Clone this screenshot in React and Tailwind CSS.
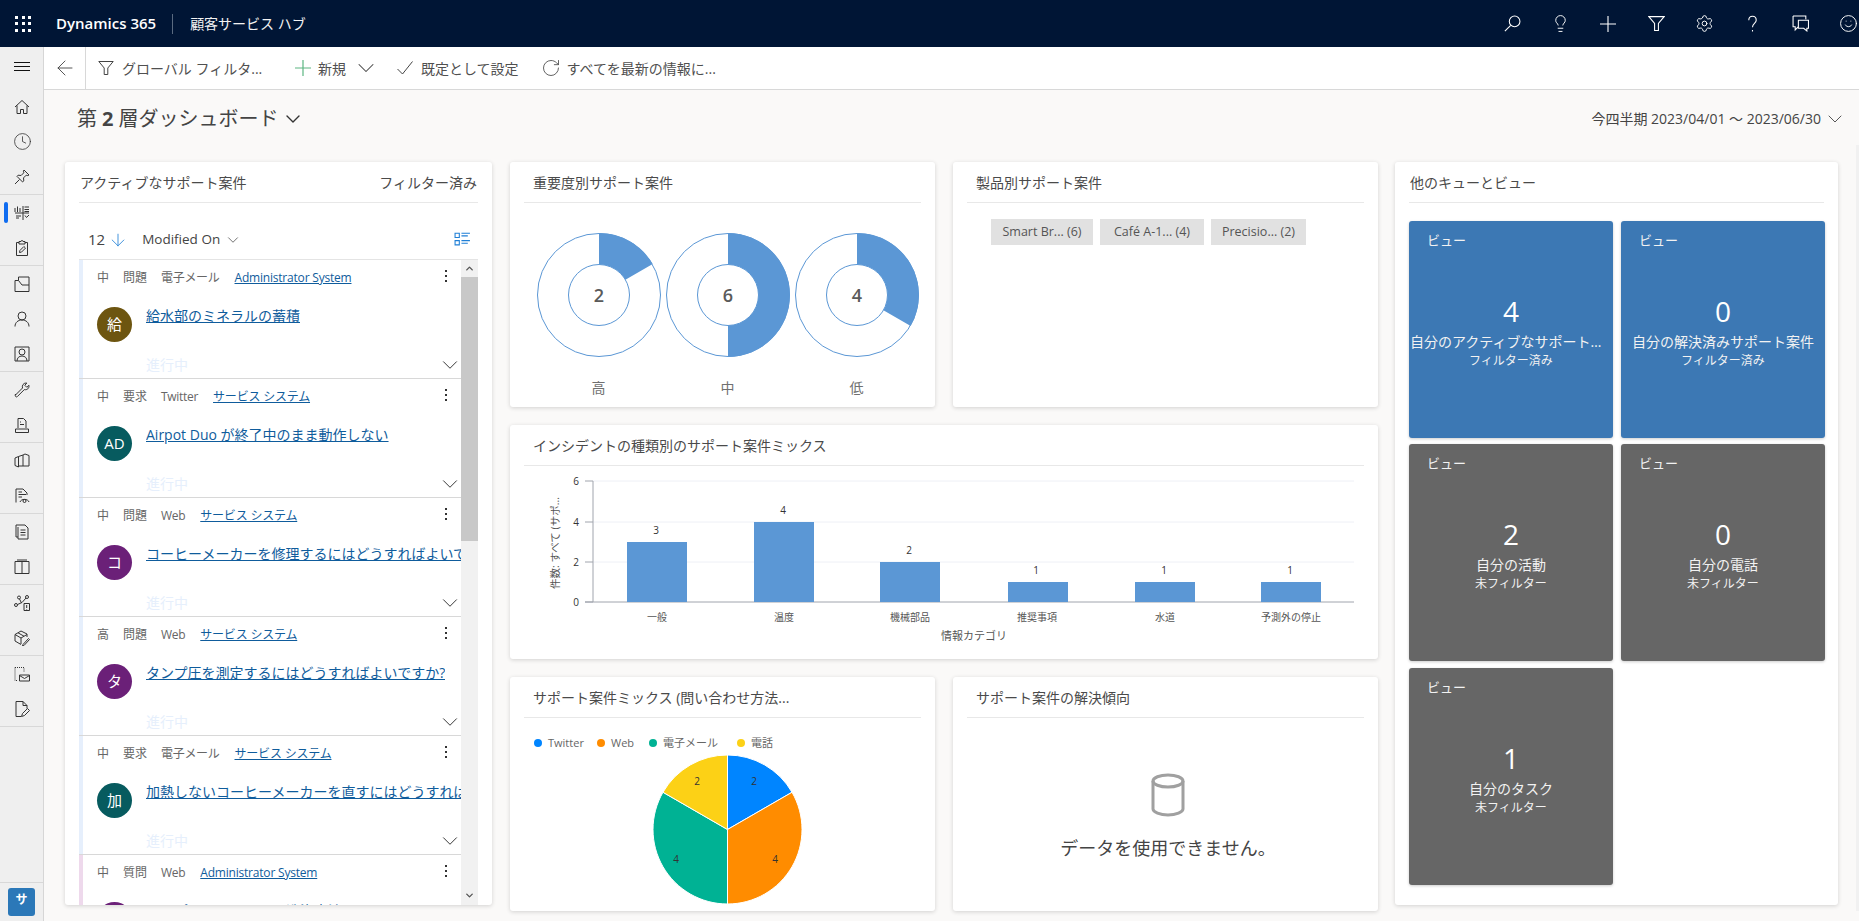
import { Settings, Smile, Lightbulb, Clock, ChevronDown, ChevronUp, ArrowLeft, ArrowDown, RotateCw } from 'lucide-react';

const Ico = ({ children, size = 16, className = 'text-[#333]', sw = 1 }) => (
    <svg width={size} height={size} viewBox="0 0 16 16" fill="none" stroke="currentColor" strokeWidth={sw} className={className}>
        {children}
    </svg>
);

const Funnel = (props) => (
    <Ico {...props}>
        <path d="M0.8 1.5h14.4L9.8 8v6.5H6.2V8z" />
    </Ico>
);

const navGroups = [
    [
        <Ico key="home"><path d="M1 8l7-6.5L15 8M3 6.5v8h3.5v-4h3v4H13v-8" /></Ico>,
        <Clock key="clock" size={19} strokeWidth={1} className="text-[#333]" />,
        <Ico key="pin"><path d="M10 1l5 5-1.2.6-1.6-.4-2.7 2.7.3 3L8.6 13 3 7.4l1.1-1.2 3 .3 2.700-2.700-.4-1.600zM5.500 10.500L1 15" /></Ico>,
    ],
    [
        <Ico key="tier"><path d="M1 7V3M3.500 7V1.500M6 7V3M9 1v14M1 8h14M10.500 2H15M10.500 4.500H15M10.500 6.500H15M11 10.500l1.500 2 2.500-2.500M2 11h5M2 13h3" /></Ico>,
        <Ico key="clip"><path d="M5 2.500H2.500v13h11v-13H11M5 4V1.500h2a1 1 0 012 0h2V4zM5.500 12.500l.4-2 4-4 1.600 1.600-4 4z" /></Ico>,
    ],
    [
        <Ico key="folder"><path d="M1 4.500v11h14V1H4.500v3.500M1 4.500h3.500L8 9h7" /></Ico>,
        <Ico key="person"><circle cx="8" cy="5" r="4" /><path d="M1 15.500c0-4 3-6.500 7-6.500s7 2.500 7 6.500" /></Ico>,
        <Ico key="contact"><path d="M1 1h14v14H1z" /><circle cx="8" cy="6" r="3" /><path d="M3 15c0-3 2-5 5-5s5 2 5 5" /></Ico>,
    ],
    [
        <Ico key="wrench"><path d="M1.500 13L8.500 6c-.8-2.500 1-5 3.500-5l.8.1-2 2.200 2 2 2.200-2c.4 3-2 5-4.700 4.300l-7 7c-1.200 1-2.800-.6-1.800-2.600z" /></Ico>,
        <Ico key="kb"><path d="M4 11V1.500h5.500L12 4v7M1.500 15.500v-3.500h13v3.500zM6 5h1M6 7.500h4" /></Ico>,
    ],
    [
        <Ico key="map"><path d="M1 5l3.500-1.500V14L1 12.500zM4.500 3.500L9 2v11H4.500M9 2l2-1 4 1.500V13H9" /></Ico>,
        <Ico key="docwatch"><path d="M2 14.500V1h7l4 4v2M4.500 4H8M4.500 6.500H12M4.500 9H8M6 14c1-3.500 8-3.500 9 0" /><circle cx="10.500" cy="13" r="1.500" /></Ico>,
    ],
    [
        <Ico key="docs"><path d="M2 1h9l3 3v11H4V3M2 1v12h2M6.500 6h5M6.500 8.500h5M6.500 11h5" /></Ico>,
        <Ico key="book"><path d="M1 2.500h14v12H1zM8 2.500v12M3 1h10" /></Ico>,
    ],
    [
        <Ico key="graph"><circle cx="5" cy="2.500" r="1.500" /><circle cx="13" cy="2" r="1.500" /><circle cx="2" cy="10" r="1.500" /><path d="M5.500 4l2 4M12 3L8 7.500l-4.500 2M10 8.500h5.500v7H10zM12.700 10v3M12.700 14v.6" /></Ico>,
        <Ico key="box"><path d="M1 4.500L7 1l6 3v3M1 4.500V11l6 3.500M1 4.500L7 8v6M7 8l6-3.500M4 2.800l6 3.400M9 14.500L14.500 8.500l1 1L10 15.500l-1.500.5z" /></Ico>,
    ],
    [
        <Ico key="mail"><path d="M1 1.500h9v5M1 1.500v13h3" strokeDasharray="1 1" /><path d="M5.500 9h10v6h-10zM5.500 9.500l5 3 5-3" /></Ico>,
        <Ico key="note"><path d="M2 15.500V.5h7l4 4v3M2 15.500h5M9 .5v4h4M7.500 15.500l1-3 5-5 2 2-5 5z" /></Ico>,
    ],
];

const Sidebar = () => (
    <aside className="w-[44px] shrink-0 bg-[#efefef] border-r border-[#d6d6d6] flex flex-col">
        <div className="h-[42px] flex items-center justify-center pb-[2px]">
            <Ico size={16} className="text-[#111]"><path d="M0 3.500h16M0 7.500h16M0 11.500h16" /></Ico>
        </div>
        {navGroups.map((group, i) => (
            <div key={i} className="border-b border-[#d8d8d8] flex flex-col">
                {group.map((icon, j) => (
                    <div key={j} className="relative h-[35px] flex items-center justify-center pl-[1px]">
                        {i === 1 && j === 0 && (
                            <span className="absolute left-[4px] top-[7px] w-[4px] h-[21px] rounded-full bg-[#0f6cf0]" />
                        )}
                        {icon}
                    </div>
                ))}
            </div>
        ))}
        <div className="mt-auto border-t border-[#d8d8d8] h-[39px] flex items-center justify-center">
            <div className="w-[27px] h-[28px] rounded-[3px] bg-[#2b78b8] text-white text-[12px] font-bold flex items-center justify-center pb-[5px]">サ</div>
        </div>
    </aside>
);

const TopBar = () => (
    <header className="h-[47px] shrink-0 bg-[#001535] text-white flex items-center overflow-hidden">
        <div className="w-[46px] flex justify-center">
            <div className="grid grid-cols-3 gap-[3.500px]">
                {Array.from({ length: 9 }).map((_, i) => (
                    <span key={i} className="w-[3px] h-[3px] bg-white" />
                ))}
            </div>
        </div>
        <span className="ml-[10px] text-[15px] font-semibold leading-none">Dynamics 365</span>
        <span className="ml-[16px] w-[1px] h-[20px] bg-[#5a6a80]" />
        <span className="ml-[17px] text-[14px] leading-none text-[#f2f2f2]">顧客サービス ハブ</span>
        <div className="ml-auto -mr-[13px] flex items-center">
            {[
                <Ico key="s" size={17} className="text-white"><circle cx="10" cy="6" r="5" /><path d="M6.300 9.700L.8 15.200" /></Ico>,
                <Lightbulb key="l" size={19} strokeWidth={1.2} />,
                <Ico key="p" size={16} className="text-white" sw={1.1}><path d="M8 0v16M0 8h16" /></Ico>,
                <Funnel key="f" size={17} className="text-white" />,
                <Settings key="g" size={19} strokeWidth={1.2} />,
                <Ico key="h" size={17} className="text-white"><path d="M4.500 5c0-5 7-5 7 0 0 3-3.500 3-3.500 6.500M8 14v1.500" /></Ico>,
                <Ico key="c" size={17} className="text-white"><path d="M1 1h12v3M1 1v10h2v3l3-3M6 5h9.500v7.500H14v2.500l-3-2.500H6z" /></Ico>,
                <Smile key="m" size={19} strokeWidth={1.2} />,
            ].map((icon, i) => (
                <div key={i} className="w-[48px] flex justify-center">{icon}</div>
            ))}
        </div>
    </header>
);

const CommandBar = () => (
    <div className="h-[43px] shrink-0 bg-white border-b border-[#d8d8d8] flex items-center text-[14px] text-[#505050] whitespace-nowrap">
        <div className="w-[42px] h-full border-r border-[#d8d8d8] flex items-center justify-center">
            <ArrowLeft size={24} strokeWidth={0.9} className="text-[#444]" />
        </div>
        <Funnel size={16} className="ml-[12px] text-[#444]" />
        <span className="ml-[8px] w-[140px]">グローバル フィルタ...</span>
        <Ico size={16} sw={1.2} className="ml-[33px] text-[#5cb682]"><path d="M8 0v16M0 8h16" /></Ico>
        <span className="ml-[7px]">新規</span>
        <ChevronDown size={28} strokeWidth={0.9} className="ml-[6px] text-[#444]" />
        <Ico size={16} className="ml-[17px] text-[#444]"><path d="M.5 9l5 5L15.500 1.500" /></Ico>
        <span className="ml-[8px]">既定として設定</span>
        <RotateCw size={20} strokeWidth={1} className="ml-[22px] text-[#444]" />
        <span className="ml-[6px]">すべてを最新の情報に...</span>
    </div>
);

const Card = ({ title, right, inset = false, className = '', children }) => (
    <section className={`bg-white rounded-[3px] shadow-[0_1px_4px_rgba(0,0,0,0.16)] px-[14px] flex flex-col overflow-hidden ${className}`}>
        <div className={`h-[41px] shrink-0 border-b border-[#e8e8e8] flex items-center justify-between pr-[1px] text-[14px] text-[#4a4a4a] ${inset ? 'pl-[9px]' : 'pl-[1px]'}`}>
            <span>{title}</span>
            {right && <span>{right}</span>}
        </div>
        {children}
    </section>
);

const cases = [
    { pri: '中', type: '問題', src: '電子メール', owner: 'Administrator System', color: 'bg-[#6d5510]', ini: '給', title: '給水部のミネラルの蓄積', strip: 'bg-[#e6effc]' },
    { pri: '中', type: '要求', src: 'Twitter', owner: 'サービス システム', color: 'bg-[#075b5f]', ini: 'AD', title: 'Airpot Duo が終了中のまま動作しない', strip: 'bg-[#e6effc]' },
    { pri: '中', type: '問題', src: 'Web', owner: 'サービス システム', color: 'bg-[#6b2078]', ini: 'コ', title: 'コーヒーメーカーを修理するにはどうすればよいですか?', strip: 'bg-[#e6effc]' },
    { pri: '高', type: '問題', src: 'Web', owner: 'サービス システム', color: 'bg-[#6b2078]', ini: 'タ', title: 'タンプ圧を測定するにはどうすればよいですか?', strip: 'bg-[#e6effc]' },
    { pri: '中', type: '要求', src: '電子メール', owner: 'サービス システム', color: 'bg-[#075b5f]', ini: '加', title: '加熱しないコーヒーメーカーを直すにはどうすればよいですか?', strip: 'bg-[#e6effc]' },
    { pri: '中', type: '質問', src: 'Web', owner: 'Administrator System', color: 'bg-[#6b2078]', ini: 'エ', title: 'エスプレッソマシンの洗浄方法', strip: 'bg-[#eed9ec]' },
];

const CaseRow = ({ item }) => (
    <div className="relative h-[119px] shrink-0 border-b border-[#d8d8d8] flex">
        <span className={`w-[4px] shrink-0 ${item.strip}`} />
        <div className="flex-1 min-w-0 pl-[14px] flex flex-col">
            <div className="h-[36px] flex items-center text-[12px] text-[#666] whitespace-nowrap">
                <span className="w-[26px]">{item.pri}</span>
                <span className="w-[38px]">{item.type}</span>
                <span className="mr-[15px] tracking-[-0.3px]">{item.src}</span>
                <span className="text-[#0f5c9c] underline tracking-[-0.2px]">{item.owner}</span>
                <span className="absolute left-[366px] top-[10px] flex flex-col gap-[3px]">
                    <i className="w-[2px] h-[2px] bg-[#333]" />
                    <i className="w-[2px] h-[2px] bg-[#333]" />
                    <i className="w-[2px] h-[2px] bg-[#333]" />
                </span>
            </div>
            <div className="flex items-start mt-[11px]">
                <div className={`w-[35px] h-[35px] rounded-full shrink-0 ${item.color} text-white text-[15px] flex items-center justify-center`}>{item.ini}</div>
                <a className="ml-[14px] -mt-[1px] text-[14px] leading-[20px] text-[#0f5c9c] underline whitespace-nowrap overflow-hidden">{item.title}</a>
            </div>
            <div className="mt-[13px] pl-[49px] text-[14px] text-[#e6effc] leading-[20px]">進行中</div>
        </div>
        <ChevronDown size={26} strokeWidth={0.9} className="absolute left-[358px] top-[92px] text-[#333]" />
    </div>
);

const CaseList = () => (
    <Card title="アクティブなサポート案件" right="フィルター済み" className="w-[427px] h-[743px]">
        <div className="h-[56px] shrink-0 flex items-center pt-[17px] text-[13.500px] text-[#444]">
            <span className="ml-[9px] text-[15px]">12</span>
            <ArrowDown size={20} strokeWidth={1} className="ml-[3px] text-[#1f7fd6]" />
            <span className="ml-[14px]">Modified On</span>
            <ChevronDown size={18} strokeWidth={1} className="ml-[4px]" />
            <Ico size={17} className="ml-auto mr-[7px] -mt-[3px] text-[#1f7fd6]">
                <path d="M1 3h4v4H1zM1 10h4v4H1zM7 3h8M7 5.500h6M7 10h8M7 12.500h6" />
            </Ico>
        </div>
        <div className="flex-1 min-h-0 flex border-t border-[#e4e4e4]">
            <div className="flex-1 min-w-0 flex flex-col overflow-hidden">
                {cases.map((item) => (
                    <CaseRow key={item.title} item={item} />
                ))}
            </div>
            <div className="w-[17px] shrink-0 bg-[#f1f1f1] flex flex-col">
                <div className="h-[17px] flex items-center justify-center">
                    <ChevronUp size={11} strokeWidth={3} className="text-[#555]" />
                </div>
                <div className="h-[264px] bg-[#c8c8c8]" />
                <div className="mt-auto h-[17px] mb-[1px] flex items-center justify-center">
                    <ChevronDown size={11} strokeWidth={3} className="text-[#555]" />
                </div>
            </div>
        </div>
    </Card>
);

const arc = (cx, cy, ro, ri, end) => {
    const a = (end * Math.PI) / 180;
    const sx = cx + ro * Math.sin(a);
    const sy = cy - ro * Math.cos(a);
    const ix = cx + ri * Math.sin(a);
    const iy = cy - ri * Math.cos(a);
    const big = end > 180 ? 1 : 0;
    return `M${cx} ${cy - ro}A${ro} ${ro} 0 ${big} 1 ${sx} ${sy}L${ix} ${iy}A${ri} ${ri} 0 ${big} 0 ${cx} ${cy - ri}Z`;
};

const Donut = ({ value, angle, label }) => (
    <div className="w-[130px] flex flex-col items-center">
        <svg width="126" height="126" viewBox="0 0 126 126">
            <circle cx="63" cy="63" r="61.500" fill="none" stroke="#5b97d5" />
            <circle cx="63" cy="63" r="30.500" fill="none" stroke="#5b97d5" />
            <path d={arc(63, 63, 62, 30.500, angle)} fill="#5b97d5" />
            <text x="63" y="70" textAnchor="middle" fontSize="18" fontWeight="600" fill="#5a5a5a">{value}</text>
        </svg>
        <span className="mt-[20px] text-[14px] text-[#707070] leading-[20px]">{label}</span>
    </div>
);

const bars = [
    { label: '一般', v: 3, x: 117, cx: 147 },
    { label: '温度', v: 4, x: 244, cx: 274 },
    { label: '機械部品', v: 2, x: 370, cx: 400 },
    { label: '推奨事項', v: 1, x: 498, cx: 527 },
    { label: '水道', v: 1, x: 625, cx: 655 },
    { label: '予測外の停止', v: 1, x: 751, cx: 781 },
];

const BarChart = () => (
    <svg width="868" height="193" viewBox="0 41 868 193" className="-ml-[14px] shrink-0 max-w-none">
        {[56, 97, 137].map((y) => (
            <line key={y} x1="83" x2="844" y1={y} y2={y} stroke="#eef0f6" />
        ))}
        {[[56, '6'], [97, '4'], [137, '2'], [177, '0']].map(([y, t]) => (
            <g key={t}>
                <line x1="75" x2="83" y1={y} y2={y} stroke="#a0a4ad" />
                <text x="66" y={y + 4} textAnchor="middle" fontSize="10" fill="#333">{t}</text>
            </g>
        ))}
        <line x1="83" x2="83" y1="56" y2="177" stroke="#a0a4ad" />
        <line x1="75" x2="844" y1="177" y2="177" stroke="#a0a4ad" />
        {bars.map((b) => (
            <g key={b.label}>
                <rect x={b.x} y={177 - b.v * 20} width="60" height={b.v * 20} fill="#5b97d5" />
                <text x={b.cx - 1} y={177 - b.v * 20 - 8} textAnchor="middle" fontSize="10" fill="#333">{b.v}</text>
                <text x={b.cx} y="196" textAnchor="middle" fontSize="10" fill="#555">{b.label}</text>
            </g>
        ))}
        <text x="464" y="215" textAnchor="middle" fontSize="11" fill="#555">情報カテゴリ</text>
        <text transform="translate(49 118) rotate(-90)" textAnchor="middle" fontSize="10.500" fill="#555">件数: すべて (サポ...</text>
    </svg>
);

const pieSlice = (from, to) => {
    const r = 74.500;
    const p = (d) => [74.500 + r * Math.sin((d * Math.PI) / 180), 74.500 - r * Math.cos((d * Math.PI) / 180)];
    const [x1, y1] = p(from);
    const [x2, y2] = p(to);
    return `M74.500 74.500L${x1} ${y1}A${r} ${r} 0 ${to - from > 180 ? 1 : 0} 1 ${x2} ${y2}Z`;
};

const legend = [
    { label: 'Twitter', color: 'bg-[#0085ff]', w: 'w-[63px]' },
    { label: 'Web', color: 'bg-[#ff8c00]', w: 'w-[52px]' },
    { label: '電子メール', color: 'bg-[#00b294]', w: 'w-[88px]' },
    { label: '電話', color: 'bg-[#fcd116]', w: 'w-[40px]' },
];

const PieCard = () => (
    <Card title="サポート案件ミックス (問い合わせ方法..." inset className="w-[425px] h-[234px]">
        <div className="flex items-center mt-[16px] pl-[10px] text-[11px] leading-[18px] text-[#666] whitespace-nowrap">
            {legend.map((l) => (
                <div key={l.label} className={`flex items-center gap-[6px] ${l.w}`}>
                    <span className={`w-[8px] h-[8px] rounded-full ${l.color}`} />
                    {l.label}
                </div>
            ))}
        </div>
        <svg width="149" height="149" viewBox="0 0 149 149" className="ml-[129px] mt-[3px] shrink-0">
            <path d={pieSlice(0, 60)} fill="#0085ff" stroke="#fff" />
            <path d={pieSlice(60, 180)} fill="#ff8c00" stroke="#fff" />
            <path d={pieSlice(180, 300)} fill="#00b294" stroke="#fff" />
            <path d={pieSlice(300, 360)} fill="#fcd116" stroke="#fff" />
            <text x="101" y="30" textAnchor="middle" fontSize="10" fill="#333">2</text>
            <text x="122" y="108" textAnchor="middle" fontSize="10" fill="#333">4</text>
            <text x="23" y="108" textAnchor="middle" fontSize="10" fill="#333">4</text>
            <text x="44" y="30" textAnchor="middle" fontSize="10" fill="#333">2</text>
        </svg>
    </Card>
);

const NoData = () => (
    <Card title="サポート案件の解決傾向" inset className="w-[425px] h-[234px]">
        <div className="flex-1 flex flex-col items-center pt-[55px] pl-[5px]">
            <svg width="34" height="44" viewBox="0 0 34 44" fill="none" stroke="#a0a0a0" strokeWidth="3">
                <ellipse cx="17" cy="8" rx="15" ry="6" />
                <path d="M2 8v28c0 3 7 6 15 6s15-3 15-6V8" />
            </svg>
            <p className="mt-[19px] text-[18px] leading-[24px] text-[#444] whitespace-nowrap">データを使用できません。</p>
        </div>
    </Card>
);

const tiles = [
    { n: 4, title: '自分のアクティブなサポート案件', sub: 'フィルター済み', color: 'bg-[#3c78b4]' },
    { n: 0, title: '自分の解決済みサポート案件', sub: 'フィルター済み', color: 'bg-[#3c78b4]' },
    { n: 2, title: '自分の活動', sub: '未フィルター', color: 'bg-[#666666]' },
    { n: 0, title: '自分の電話', sub: '未フィルター', color: 'bg-[#666666]' },
    { n: 1, title: '自分のタスク', sub: '未フィルター', color: 'bg-[#666666] mt-[1px]' },
];

const Tile = ({ t }) => (
    <div className={`h-[217px] ${t.color} rounded-[3px] text-white flex flex-col items-center shadow-[0_1px_3px_rgba(0,0,0,0.2)]`}>
        <div className="self-start pl-[18px] pt-[10px] text-[13px] leading-[18px] text-[#f2f2f2]">ビュー</div>
        <div className="mt-[44px] text-[28px] leading-[36px]">{t.n}</div>
        <div className="mt-[3px] w-full px-[1px] truncate text-center text-[14px] leading-[20px] text-[#f2f2f2]">{t.title}</div>
        <div className="mt-[1px] text-[12px] leading-[16px] text-[#f2f2f2]">{t.sub}</div>
    </div>
);

const Queues = () => (
    <Card title="他のキューとビュー" className="w-[443px] h-[743px] shrink-0 -ml-[1px]">
        <div className="grid grid-cols-[204px_204px] gap-x-[8px] gap-y-[6px] mt-[18px]">
            {tiles.map((t, i) => (
                <Tile key={i} t={t} />
            ))}
        </div>
    </Card>
);

export default function App() {
    return (
        <div className="h-screen w-full overflow-hidden flex flex-col font-['Open_Sans','Noto_Sans_CJK_JP',sans-serif] bg-[#faf9f8]">
            <TopBar />
            <div className="flex-1 min-h-0 flex">
                <Sidebar />
                <main className="flex-1 min-w-0 flex flex-col">
                    <CommandBar />
                    <div className="h-[72px] shrink-0 flex items-start pl-[33px] pr-[12px] pt-[15px]">
                        <h1 className="text-[20px] leading-[28px] text-[#444] flex items-center">
                            第 <b className="mx-[5px] font-bold">2</b> 層ダッシュボード
                            <ChevronDown size={24} strokeWidth={1.4} className="ml-[3px] text-[#333]" />
                        </h1>
                        <div className="ml-auto flex items-center text-[14px] leading-[28px] text-[#444]">
                            今四半期 2023/04/01 〜 2023/06/30
                            <ChevronDown size={24} strokeWidth={0.9} className="ml-[2px]" />
                        </div>
                    </div>
                    <div className="flex gap-[18px] pl-[21px]">
                        <CaseList />
                        <div className="w-[868px] shrink-0 flex flex-col gap-[18px]">
                            <div className="flex gap-[18px]">
                                <Card title="重要度別サポート案件" inset className="w-[425px] h-[245px]">
                                    <div className="flex justify-center mt-[29px] pl-[10px]">
                                        <Donut value={2} angle={60} label="高" />
                                        <Donut value={6} angle={180} label="中" />
                                        <Donut value={4} angle={120} label="低" />
                                    </div>
                                </Card>
                                <Card title="製品別サポート案件" inset className="w-[425px] h-[245px]">
                                    <div className="flex gap-[7px] mt-[16px] pl-[24px] text-[12.500px] text-[#555]">
                                        <span className="w-[102px] h-[26px] bg-[#e1e1e1] flex items-center justify-center">Smart Br... (6)</span>
                                        <span className="w-[104px] h-[26px] bg-[#e1e1e1] flex items-center justify-center">Café A-1... (4)</span>
                                        <span className="w-[95px] h-[26px] bg-[#e1e1e1] flex items-center justify-center">Precisio... (2)</span>
                                    </div>
                                </Card>
                            </div>
                            <Card title="インシデントの種類別のサポート案件ミックス" inset className="h-[234px]">
                                <BarChart />
                            </Card>
                            <div className="flex gap-[18px]">
                                <PieCard />
                                <NoData />
                            </div>
                        </div>
                        <Queues />
                        <div className="ml-auto -mt-[17px] w-[3px] bg-[#f1f1f1]" />
                    </div>
                </main>
            </div>
        </div>
    );
}
